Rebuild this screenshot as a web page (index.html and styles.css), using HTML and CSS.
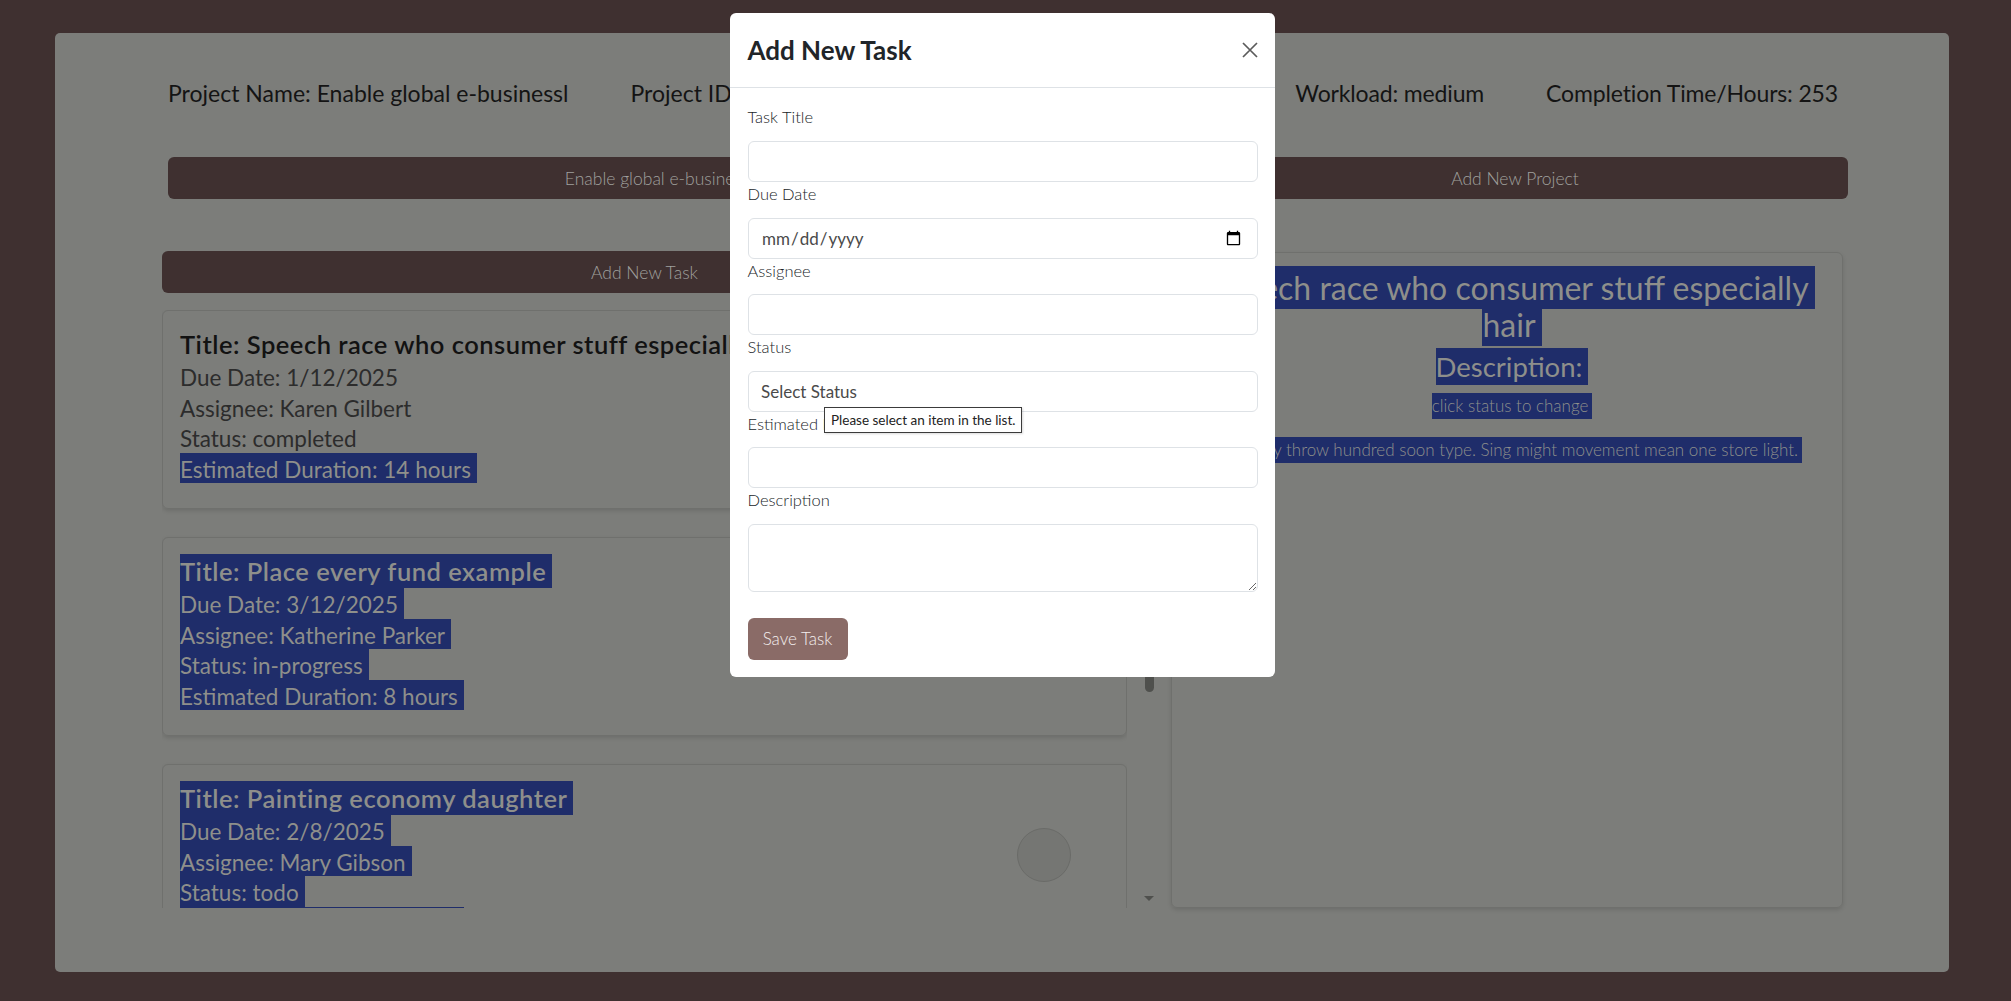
FILE: index.html
```html
<!DOCTYPE html>
<html lang="en">
<head>
<meta charset="utf-8">
<title>Project Tasks</title>
<link rel="stylesheet" href="styles.css">
</head>
<body>
<div class="page">
  <div class="info-row">
    <div class="info-item">Project Name: Enable global e-businessl</div>
    <div class="info-item">Project ID: 67b2e8f1c4a9d3e5</div>
    <div class="info-item info-grow">Status: active</div>
    <div class="info-item info-tight">Workload: medium</div>
    <div class="info-item info-tight">Completion Time/Hours: 253</div>
  </div>

  <div class="btn-row">
    <button class="dark-btn project-btn">Enable global e-businessl</button>
    <button class="dark-btn new-project-btn">Add New Project</button>
  </div>

  <div class="main-row">
    <div class="left-col">
      <button class="dark-btn add-task-btn">Add New Task</button>
      <div class="task-area">
        <div class="task-list">
          <div class="task-card">
            <div class="t-title">Title: Speech race who consumer stuff especially hair</div>
            <div class="t-line">Due Date: 1/12/2025</div>
            <div class="t-line">Assignee: Karen Gilbert</div>
            <div class="t-line">Status: completed</div>
            <div class="t-line"><span class="sel">Estimated Duration: 14 hours</span></div>
          </div>
          <div class="task-card">
            <div class="t-title"><span class="sel">Title: Place every fund example</span></div>
            <div class="t-line"><span class="sel">Due Date: 3/12/2025</span></div>
            <div class="t-line"><span class="sel">Assignee: Katherine Parker</span></div>
            <div class="t-line"><span class="sel">Status: in-progress</span></div>
            <div class="t-line"><span class="sel">Estimated Duration: 8 hours</span></div>
          </div>
          <div class="task-card">
            <div class="t-title"><span class="sel">Title: Painting economy daughter</span></div>
            <div class="t-line"><span class="sel">Due Date: 2/8/2025</span></div>
            <div class="t-line"><span class="sel">Assignee: Mary Gibson</span></div>
            <div class="t-line"><span class="sel">Status: todo</span></div>
            <div class="t-line"><span class="sel">Estimated Duration: 6 hours</span></div>
          </div>
          <div class="task-card">
            <div class="t-title"><span class="sel">Title: Maintain growth method</span></div>
            <div class="t-line"><span class="sel">Due Date: 4/2/2025</span></div>
            <div class="t-line"><span class="sel">Assignee: David Moore</span></div>
            <div class="t-line"><span class="sel">Status: todo</span></div>
            <div class="t-line"><span class="sel">Estimated Duration: 11 hours</span></div>
          </div>
        </div>
        <div class="scrollbar">
          <div class="sb-btn"></div>
          <div class="sb-thumb"></div>
          <div class="sb-space"></div>
          <div class="sb-btn"><div class="sb-down"></div></div>
        </div>
      </div>
    </div>

    <div class="detail">
      <h2 class="detail-title"><span class="sel-inline">Speech race who consumer stuff especially hair</span></h2>
      <h3 class="detail-sub"><span class="sel-inline">Description:</span></h3>
      <p class="detail-hint"><span class="sel">click status to change</span></p>
      <p class="detail-desc"><span class="sel">Country throw hundred soon type. Sing might movement mean one store light.</span></p>
    </div>
  </div>

  <div class="cursor-dot"></div>
</div>

<div class="modal">
  <div class="modal-header">
    <h5 class="modal-title">Add New Task</h5>
    <svg class="close-icon" width="16" height="16" viewBox="0 0 16 16">
      <path d="M1 1 L15 15 M15 1 L1 15" stroke="#5b5b5b" stroke-width="1.7" fill="none"/>
    </svg>
  </div>
  <div class="modal-body">
    <label class="f-label">Task Title</label>
    <input class="f-control" type="text">
    <label class="f-label">Due Date</label>
    <input class="f-control" type="date">
    <label class="f-label">Assignee</label>
    <input class="f-control" type="text">
    <label class="f-label">Status</label>
    <select class="f-control">
      <option>Select Status</option>
    </select>
    <label class="f-label">Estimated Duration (hours)</label>
    <input class="f-control" type="text">
    <label class="f-label">Description</label>
    <textarea class="f-control f-area"></textarea>
    <button class="save-btn">Save Task</button>
  </div>
  <div class="tooltip">Please select an item in the list.</div>
</div>
</body>
</html>
```
FILE: styles.css
```css
* { box-sizing: border-box; }

html, body {
  margin: 0;
  padding: 0;
}

body {
  background: #3f3030;
  font-family: "Lato", "Open Sans", sans-serif;
  padding: 33px 62px 29px 55px;
  width: 2011px;
  height: 1001px;
  overflow: hidden;
}

.page {
  position: relative;
  background: #7c7d7a;
  border-radius: 5px;
  height: 939px;
  padding: 44px 106px 0 107px;
}

.info-row {
  display: flex;
  gap: 62px;
  margin: 0 5px 0 6px;
  font-size: 23px;
  line-height: 32px;
  color: #141414;
  white-space: nowrap;
}

.info-item { overflow: hidden; }
.info-grow { flex: 1; }
.info-tight { letter-spacing: -0.15px; }

.btn-row {
  display: flex;
  gap: 32px;
  margin: 48px -5px 0 6px;
}

.dark-btn {
  background: #3f3030;
  color: #a0a09e;
  border: none;
  border-radius: 6px;
  height: 42px;
  font-family: "Lato", "Open Sans", sans-serif;
  font-weight: 300;
  font-size: 17.5px;
  padding: 0;
}

.project-btn { width: 982px; }
.new-project-btn { flex: 1; }

.main-row {
  display: grid;
  grid-template-columns: 995px 672px;
  gap: 14px;
  margin-top: 52px;
}

.left-col {
  display: flex;
  flex-direction: column;
}

.add-task-btn {
  width: 965px;
}

.task-area {
  display: flex;
  margin-top: 17px;
  height: 598px;
}

.task-list {
  width: 965px;
  overflow: hidden;
}

.scrollbar {
  width: 16px;
  margin-left: 14px;
  display: flex;
  flex-direction: column;
  align-items: center;
}

.sb-btn {
  height: 16px;
  width: 16px;
  display: flex;
  justify-content: center;
  align-items: center;
}

.sb-thumb {
  width: 9px;
  height: 366px;
  border-radius: 5px;
  background: #4f504d;
}

.sb-space { flex: 1; }

.sb-down {
  width: 0;
  height: 0;
  border-left: 5px solid transparent;
  border-right: 5px solid transparent;
  border-top: 5px solid #4f504d;
  margin-top: -4px;
}

.task-card {
  border: 1px solid #6f706d;
  border-radius: 6px;
  padding: 16px 17px 25px 17px;
  margin-bottom: 28px;
  box-shadow: 0 2px 4px rgba(0, 0, 0, 0.12);
}

.t-title {
  font-size: 25.5px;
  font-weight: 600;
  letter-spacing: 0.5px;
  line-height: 34px;
  height: 34px;
  color: #121212;
  white-space: nowrap;
}

.t-line {
  font-size: 22.5px;
  line-height: 34px;
  height: 30.5px;
  color: #2c2c2c;
  white-space: nowrap;
}

.sel {
  display: inline-block;
  background: #1f2d6a;
  color: #8e8f8b;
  padding-right: 6px;
  vertical-align: top;
}

.t-line .sel {
  height: 30.5px;
}

.sel-inline {
  background: #1f2d6a;
  color: #8e8f8b;
  padding: 2px 6px 2px 0;
  -webkit-box-decoration-break: clone;
  box-decoration-break: clone;
}

.detail {
  margin-top: 1px;
  height: 656px;
  border: 1px solid #6f706d;
  border-radius: 6px;
  padding: 16px 11px 16px 21px;
  text-align: center;
  box-shadow: 0 2px 4px rgba(0, 0, 0, 0.12);
}

.detail-title {
  margin: 0 0 8px;
  font-size: 32px;
  font-weight: 400;
  line-height: 37px;
}

.detail-sub {
  margin: 0 0 9.6px;
  font-size: 27.5px;
  font-weight: 400;
  line-height: 32px;
}

.detail-hint {
  margin: 0 0 18px;
  font-size: 17px;
  font-weight: 300;
  line-height: 26px;
}

.detail-desc {
  margin: 0;
  font-size: 17px;
  font-weight: 300;
  line-height: 26px;
}

.detail-hint .sel,
.detail-desc .sel {
  padding-right: 4px;
}

.cursor-dot {
  position: absolute;
  left: 962px;
  top: 795px;
  width: 54px;
  height: 54px;
  border-radius: 50%;
  background: #757673;
  border: 1px solid #6a6b68;
}

/* Modal */
.modal {
  position: absolute;
  left: 730px;
  top: 13px;
  width: 545px;
  height: 664px;
  background: #fff;
  border-radius: 6px;
  color: #212529;
}

.modal-header {
  height: 75px;
  border-bottom: 1px solid #dee2e6;
  display: flex;
  align-items: center;
  justify-content: space-between;
  padding: 0 17.5px;
}

.modal-title {
  margin: 0;
  font-size: 26px;
  font-weight: 700;
  line-height: 32px;
  color: #212529;
}

.close-icon {
  display: block;
}

.modal-body {
  display: flex;
  flex-direction: column;
  align-items: stretch;
  padding: 17.4px 17.5px 17px;
}

.f-label {
  font-size: 16.5px;
  font-weight: 300;
  line-height: 25.6px;
  margin-bottom: 10px;
  color: #212529;
}

.f-control {
  height: 41px;
  border: 1px solid #dee2e6;
  border-radius: 6px;
  padding: 0 12.5px;
  font-family: "Lato", "Open Sans", sans-serif;
  font-size: 17px;
  font-weight: 400;
  color: #4a4a4a;
  background: #fff;
  -webkit-appearance: none;
  appearance: none;
  outline: none;
}

input[type="date"].f-control {
  -webkit-appearance: auto;
  appearance: auto;
}

.f-area {
  height: 68px;
  resize: vertical;
}

.save-btn {
  align-self: flex-start;
  margin-top: 26px;
  width: 100px;
  height: 42px;
  background: #8a6b67;
  color: #f4eeee;
  border: none;
  border-radius: 6px;
  font-family: "Lato", "Open Sans", sans-serif;
  font-weight: 300;
  font-size: 17px;
  padding: 0;
}

.tooltip {
  position: absolute;
  left: 94px;
  top: 394px;
  height: 26px;
  padding: 0 6px;
  border: 1px solid #3b3b3b;
  background: #fff;
  font-size: 13.5px;
  line-height: 24px;
  color: #222;
  white-space: nowrap;
  box-shadow: 1px 1px 2px rgba(0, 0, 0, 0.15);
}
```
